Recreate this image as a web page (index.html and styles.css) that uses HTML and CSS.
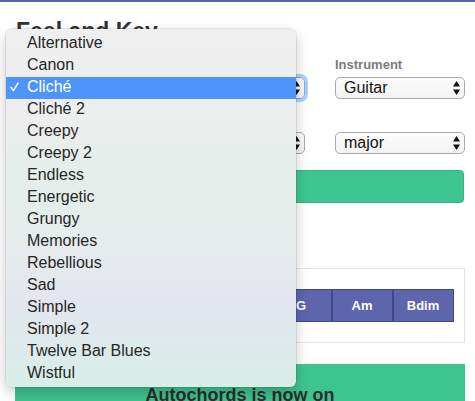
FILE: index.html
```html
<!DOCTYPE html>
<html lang="en">
<head>
<meta charset="utf-8">
<title>Autochords</title>
<link rel="stylesheet" href="styles.css">
</head>
<body>
<div class="topbar"></div>
<main class="container">
  <h2 class="title">Feel and Key</h2>
  <div class="form-row">
    <div class="col-main">
      <label class="lbl">Feel</label>
      <div class="select focus"><span>Cliché</span>
        <svg class="arrows" width="7" height="14" viewBox="0 0 7 14"><path d="M0 5.5 L3.5 0 L7 5.5 Z M0 8.5 L3.5 14 L7 8.5 Z" fill="#111"/></svg>
      </div>
    </div>
    <div class="col-side">
      <label class="lbl">Instrument</label>
      <div class="select"><span>Guitar</span>
        <svg class="arrows" width="7" height="14" viewBox="0 0 7 14"><path d="M0 5.5 L3.5 0 L7 5.5 Z M0 8.5 L3.5 14 L7 8.5 Z" fill="#111"/></svg>
      </div>
    </div>
  </div>
  <div class="form-row row2">
    <div class="col-main">
      <label class="lbl">Key</label>
      <div class="select"><span>C</span>
        <svg class="arrows" width="7" height="14" viewBox="0 0 7 14"><path d="M0 5.5 L3.5 0 L7 5.5 Z M0 8.5 L3.5 14 L7 8.5 Z" fill="#111"/></svg>
      </div>
    </div>
    <div class="col-side">
      <div class="select"><span>major</span>
        <svg class="arrows" width="7" height="14" viewBox="0 0 7 14"><path d="M0 5.5 L3.5 0 L7 5.5 Z M0 8.5 L3.5 14 L7 8.5 Z" fill="#111"/></svg>
      </div>
    </div>
  </div>
  <button class="btn-generate">Generate</button>
  <div class="card">
    <div class="chords">
      <span class="chord">C</span><span class="chord">Dm</span><span class="chord">Em</span><span class="chord">F</span><span class="chord">G</span><span class="chord">Am</span><span class="chord">Bdim</span>
    </div>
  </div>
  <div class="banner">Autochords is now on</div>
</main>

<ul class="menu">
  <li class="item">Alternative</li>
  <li class="item">Canon</li>
  <li class="item selected"><svg class="check" width="9" height="10" viewBox="0 0 9 10"><path d="M1 5.5 L3.4 8.6 L8 1.2" fill="none" stroke="#fff" stroke-width="1.6" stroke-linecap="round" stroke-linejoin="round"/></svg>Cliché</li>
  <li class="item">Cliché 2</li>
  <li class="item">Creepy</li>
  <li class="item">Creepy 2</li>
  <li class="item">Endless</li>
  <li class="item">Energetic</li>
  <li class="item">Grungy</li>
  <li class="item">Memories</li>
  <li class="item">Rebellious</li>
  <li class="item">Sad</li>
  <li class="item">Simple</li>
  <li class="item">Simple 2</li>
  <li class="item">Twelve Bar Blues</li>
  <li class="item">Wistful</li>
</ul>
</body>
</html>
```

FILE: styles.css
```css
* { box-sizing: border-box; }
html, body { margin: 0; padding: 0; background: #fff; }
body {
  font-family: "Liberation Sans", Arial, sans-serif;
  color: #333;
  overflow: hidden;
  height: 401px;
}
.topbar { height: 2px; background: #5c63ad; }
.container { width: 450px; margin-left: 15px; }
.title {
  margin: 17px 0 0 1px;
  font-size: 23px;
  line-height: 1.1;
  font-weight: bold;
  color: #333;
}
.form-row { display: flex; gap: 30px; margin-top: 13px; align-items: flex-end; }
.col-main { width: 290px; }
.col-side { width: 130px; }
.lbl {
  display: block;
  font-size: 13px;
  line-height: 16px;
  font-weight: bold;
  color: #7b7b7b;
  margin-bottom: 4px;
}
.select {
  position: relative;
  height: 22px;
  border: 1px solid #a8a8a8;
  border-radius: 5px;
  background: linear-gradient(#fdfdfd, #f3f3f3);
  font-size: 16px;
  line-height: 20px;
  color: #111;
  padding-left: 8px;
  display: flex;
  align-items: center;
  justify-content: space-between;
  padding-right: 4px;
}
.select.focus {
  border-color: #7aaef0;
  box-shadow: 0 0 1px 3px rgba(110, 165, 245, 0.55);
}
.arrows { display: block; flex: none; }
.btn-generate {
  display: block;
  width: 449px;
  height: 33px;
  margin-top: 16px;
  border: 1px solid #36b384;
  border-radius: 4px;
  background: #3fc592;
  color: #fff;
  font-family: inherit;
  font-size: 15px;
  font-weight: bold;
}
.card {
  margin-top: 65px;
  height: 75px;
  border: 1px solid #e3e3e3;
  padding-top: 20px;
  display: flex;
  justify-content: center;
  align-items: flex-start;
}
.chords { display: flex; }
.chord {
  width: 61px;
  height: 33px;
  border: 1px solid #3f4989;
  background: #5d66ad;
  color: #fff;
  font-size: 13px;
  font-weight: bold;
  display: flex;
  align-items: center;
  justify-content: center;
}
.banner {
  margin-top: 21px;
  height: 37px;
  overflow: hidden;
  background: #3ec491;
  padding-top: 21px;
  text-align: center;
  font-size: 18px;
  line-height: 21px;
  font-weight: bold;
  color: #2d2d2d;
}
.menu {
  position: absolute;
  left: 6px;
  top: 29px;
  width: 290px;
  height: 358px;
  margin: 0;
  padding: 4px 0 0;
  list-style: none;
  border-radius: 6px;
  background: linear-gradient(180deg, #efefef 0%, #eeeeee 22%, #e3eeea 42%, #e7ecec 58%, #e4e6ee 76%, #dcebea 90%, #d8eee7 100%);
  box-shadow: 0 0 0 0.5px rgba(0, 0, 0, 0.15), 0 5px 14px rgba(0, 0, 0, 0.22);
  font-family: "Liberation Sans", Arial, sans-serif;
}
.item {
  position: relative;
  height: 22px;
  line-height: 19px;
  padding-left: 21px;
  font-size: 16px;
  color: #262626;
}
.item.selected { background: #4d95fa; color: #fff; }
.check { position: absolute; left: 4px; top: 5px; }
```
